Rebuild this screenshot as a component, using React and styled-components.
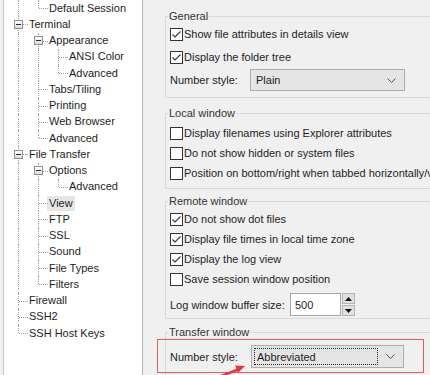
import React from 'react';
import styled, { createGlobalStyle, css } from 'styled-components';

const GlobalStyle = createGlobalStyle`
  *, *::before, *::after { box-sizing: border-box; }
  html, body { margin: 0; padding: 0; }
  body {
    background: #f0f0f0;
    font-family: 'Liberation Sans', Arial, sans-serif;
    font-size: 11px;
    color: #1e1e1e;
    overflow: hidden;
  }
`;

const Window = styled.div`
  display: flex;
  width: 430px;
  height: 375px;
  overflow: hidden;
`;

/* ---------- tree ---------- */

const TreePane = styled.div`
  flex: 0 0 140px;
  margin-left: 3px;
  background: #fff;
  border-left: 1px solid #c4c4c4;
  border-right: 1px solid #b4b4b4;
  padding-left: 4px;
`;

const TreeRow = styled.div`
  display: flex;
  height: 16.25px;
  white-space: nowrap;
`;

const Guide = styled.span`
  position: relative;
  flex: 0 0 20px;
  ${({ $kind }) =>
    $kind !== 'blank' &&
    css`
      &::before {
        content: '';
        position: absolute;
        left: 10px;
        top: 0;
        bottom: ${$kind === 'corner' ? '50%' : '0'};
        border-left: 1px dotted #a0a0a0;
      }
    `}
  ${({ $kind }) =>
    ($kind === 'tee' || $kind === 'corner') &&
    css`
      &::after {
        content: '';
        position: absolute;
        left: 11px;
        right: 0;
        top: 50%;
        border-top: 1px dotted #a0a0a0;
      }
    `}
`;

const Expander = styled.span`
  position: absolute;
  z-index: 1;
  left: 6px;
  top: 50%;
  margin-top: -4.5px;
  width: 9px;
  height: 9px;
  border: 1px solid #8f8f8f;
  background: linear-gradient(#ffffff, #dcdcdc);
  &::after {
    content: '';
    position: absolute;
    left: 1px;
    right: 1px;
    top: 3px;
    height: 1px;
    background: #2b2b2b;
  }
`;

const NodeLabel = styled.span`
  align-self: center;
  margin-left: -1px;
  padding: 0 2px;
  line-height: 15px;
  background: ${({ $selected }) => ($selected ? '#e6e6e6' : 'transparent')};
`;

/* ---------- settings ---------- */

const SettingsPane = styled.div`
  flex: 0 0 273px;
  margin-left: 22px;
  padding-top: 9.5px;
`;

const Group = styled.fieldset`
  margin: ${({ $mt }) => $mt}px 0 0;
  padding: ${({ $pt }) => $pt}px 4px ${({ $pb }) => $pb}px 4px;
  border: 1px solid #dadada;
  min-width: 0;
`;

const Legend = styled.legend`
  margin-left: -2px;
  padding: 0 1px;
  line-height: 13px;
  color: #333;
`;

const CheckRow = styled.label`
  display: flex;
  align-items: center;
  gap: 1px;
  height: ${({ $h }) => $h}px;
  white-space: nowrap;
`;

const Box = styled.span`
  flex: 0 0 13px;
  height: 13px;
  border: 1px solid #333;
  background: #fff;
  display: flex;
  align-items: center;
  justify-content: center;
`;

const FieldRow = styled.div`
  display: flex;
  align-items: center;
  margin-top: ${({ $mt = 0 }) => $mt}px;
  white-space: nowrap;
`;

const FieldLabel = styled.span`
  flex: 0 0 ${({ $w }) => $w}px;
`;

const Select = styled.div`
  position: relative;
  display: flex;
  align-items: center;
  width: ${({ $w }) => $w}px;
  height: ${({ $h }) => $h}px;
  padding: 2px 8px 2px 2px;
  background: #e5e5e5;
  border: 1px solid #adadad;
`;

const SelectValue = styled.span`
  flex: 1;
  height: 100%;
  display: flex;
  align-items: center;
  padding-left: 2px;
  margin-right: 8px;
  border: 1px dotted ${({ $focused }) => ($focused ? '#222' : 'transparent')};
`;

const NumberInput = styled.div`
  width: 51px;
  height: 23px;
  display: flex;
  align-items: center;
  padding-left: 4px;
  background: #fff;
  border: 1px solid #a8a8a8;
`;

const Spinner = styled.div`
  display: flex;
  flex-direction: column;
  gap: 1px;
  margin-left: 1px;
`;

const SpinButton = styled.div`
  width: 13px;
  height: 11px;
  display: flex;
  align-items: center;
  justify-content: center;
  background: #e1e1e1;
  border: 1px solid #b4b4b4;
`;

const Highlight = styled.div`
  position: relative;
  width: 267px;
  margin-left: -13px;
  padding: 5px 0 4px 12px;
  border: 1.5px solid #e35a5f;
`;

const Arrow = styled.svg`
  position: absolute;
  left: 50px;
  top: 18px;
  overflow: visible;
`;

/* ---------- data ---------- */

const tree = [
  { label: 'Session', hidden: true, children: [{ label: 'Default Session' }] },
  {
    label: 'Terminal',
    children: [
      { label: 'Appearance', children: [{ label: 'ANSI Color' }, { label: 'Advanced' }] },
      { label: 'Tabs/Tiling' },
      { label: 'Printing' },
      { label: 'Web Browser' },
      { label: 'Advanced' },
    ],
  },
  {
    label: 'File Transfer',
    children: [
      { label: 'Options', children: [{ label: 'Advanced' }] },
      { label: 'View', selected: true },
      { label: 'FTP' },
      { label: 'SSL' },
      { label: 'Sound' },
      { label: 'File Types' },
      { label: 'Filters' },
    ],
  },
  { label: 'Firewall' },
  { label: 'SSH2' },
  { label: 'SSH Host Keys' },
];

const flatten = (nodes, trail = [], out = []) => {
  nodes.forEach((node, i) => {
    const last = i === nodes.length - 1;
    out.push({ ...node, trail, last });
    if (node.children) flatten(node.children, [...trail, !last], out);
  });
  return out;
};

const rows = flatten(tree).filter((r) => !r.hidden);

const Check = () => (
  <svg width="11" height="11" viewBox="0 0 11 11">
    <polyline points="1.5,5.5 4,8 9.5,2.5" fill="none" stroke="#3a3a3a" strokeWidth="1.2" />
  </svg>
);

const Checkbox = ({ checked, h, children }) => (
  <CheckRow $h={h}>
    <Box>{checked && <Check />}</Box>
    {children}
  </CheckRow>
);

const Chevron = () => (
  <svg width="9" height="5" viewBox="0 0 9 5">
    <polyline points="0.5,0.5 4.5,4.5 8.5,0.5" fill="none" stroke="#555" strokeWidth="1" />
  </svg>
);

const Triangle = ({ up }) => (
  <svg width="7" height="4" viewBox="0 0 7 4">
    <polygon points={up ? '0,4 7,4 3.5,0' : '0,0 7,0 3.5,4'} fill="#111" />
  </svg>
);

const App = () => (
  <Window>
    <GlobalStyle />
    <TreePane>
      {rows.map((row, i) => (
        <TreeRow key={i}>
          {row.trail.map((on, k) => (
            <Guide key={k} $kind={on ? 'pipe' : 'blank'} />
          ))}
          <Guide $kind={row.last ? 'corner' : 'tee'}>{row.children && <Expander />}</Guide>
          <NodeLabel $selected={row.selected}>{row.label}</NodeLabel>
        </TreeRow>
      ))}
    </TreePane>

    <SettingsPane>
      <Group $mt={0} $pt={0} $pb={6}>
        <Legend>General</Legend>
        <Checkbox checked h={23}>Show file attributes in details view</Checkbox>
        <Checkbox checked h={23}>Display the folder tree</Checkbox>
        <FieldRow $mt={0.5}>
          <FieldLabel $w={80}>Number style:</FieldLabel>
          <Select $w={155} $h={22}>
            <SelectValue>Plain</SelectValue>
            <Chevron />
          </Select>
        </FieldRow>
      </Group>

      <Group $mt={9} $pt={3} $pb={5}>
        <Legend>Local window</Legend>
        <Checkbox h={20}>Display filenames using Explorer attributes</Checkbox>
        <Checkbox h={20}>Do not show hidden or system files</Checkbox>
        <Checkbox h={20}>Position on bottom/right when tabbed horizontally/vertically</Checkbox>
      </Group>

      <Group $mt={5.5} $pt={1.5} $pb={2}>
        <Legend>Remote window</Legend>
        <Checkbox checked h={20}>Do not show dot files</Checkbox>
        <Checkbox checked h={20}>Display file times in local time zone</Checkbox>
        <Checkbox checked h={20}>Display the log view</Checkbox>
        <Checkbox h={20}>Save session window position</Checkbox>
        <FieldRow $mt={4}>
          <FieldLabel $w={120}>Log window buffer size:</FieldLabel>
          <NumberInput>500</NumberInput>
          <Spinner>
            <SpinButton><Triangle up /></SpinButton>
            <SpinButton><Triangle /></SpinButton>
          </Spinner>
        </FieldRow>
      </Group>

      <Group $mt={7} $pt={0} $pb={6}>
        <Legend>Transfer window</Legend>
        <Highlight>
          <FieldRow>
            <FieldLabel $w={81}>Number style:</FieldLabel>
            <Select $w={153} $h={23}>
              <SelectValue $focused>Abbreviated</SelectValue>
              <Chevron />
            </Select>
          </FieldRow>
          <Arrow width="45" height="25" viewBox="0 0 45 25">
            <line x1="6" y1="21" x2="30" y2="11.5" stroke="#e0383e" strokeWidth="2.5" />
            <polygon points="37,8 29.8,15 27.3,7.6" fill="#e0383e" />
          </Arrow>
        </Highlight>
      </Group>
    </SettingsPane>
  </Window>
);

export default App;
